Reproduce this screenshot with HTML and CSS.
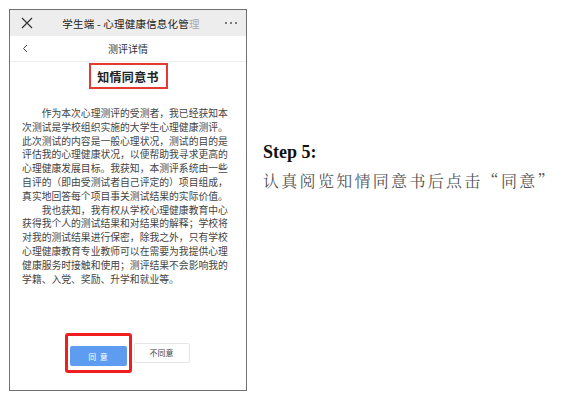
FILE: index.html
```html
<!DOCTYPE html>
<html lang="zh-CN">
<head>
  <meta charset="UTF-8" />
  <meta name="viewport" content="width=device-width, initial-scale=1.0"/>
  <title>Step 5</title>
  <link rel="stylesheet" href="styles.css">
</head>
<body>
  <div class="page">
    <div class="phone">
      <div class="topbar">
        <svg class="close" width="12" height="12" viewBox="0 0 12 12">
          <path d="M1 1L11 11M11 1L1 11" stroke="#333" stroke-width="1.2" fill="none"/>
        </svg>
        <div class="app-title">学生端 - 心理健康信息化管<span class="fade">理</span></div>
        <div class="dots"><i></i><i></i><i></i></div>
      </div>

      <div class="navbar">
        <svg class="back" width="6" height="9" viewBox="0 0 6 9">
          <path d="M5 1L1.5 4.5L5 8" stroke="#444" stroke-width="1" fill="none"/>
        </svg>
        <div class="nav-title">测评详情</div>
      </div>

      <div class="doc">
        <div class="doc-title">知情同意书</div>
        <div class="doc-text">
          <p>作为本次心理测评的受测者，我已经获知本次测试是学校组织实施的大学生心理健康测评。此次测试的内容是一般心理状况，测试的目的是评估我的心理健康状况，以便帮助我寻求更高的心理健康发展目标。我获知，本测评系统由一些自评的（即由受测试者自己评定的）项目组成，真实地回答每个项目事关测试结果的实际价值。</p>
          <p>我也获知，我有权从学校心理健康教育中心获得我个人的测试结果和对结果的解释；学校将对我的测试结果进行保密，除我之外，只有学校心理健康教育专业教师可以在需要为我提供心理健康服务时接触和使用；测评结果不会影响我的学籍、入党、奖励、升学和就业等。</p>
        </div>

        <div class="actions">
          <div class="highlight">
            <button class="btn agree">同&nbsp;&nbsp;意</button>
          </div>
          <button class="btn disagree">不同意</button>
        </div>
      </div>
    </div>

    <div class="note">
      <div class="step">Step 5:</div>
      <div class="hint">认真阅览知情同意书后点击“同意”</div>
    </div>
  </div>
</body>
</html>
```

FILE: styles.css
```css
* { box-sizing: border-box; margin: 0; padding: 0; }
body {
  background: #fff;
  color: #222;
  font-family: "Noto Sans CJK SC", "Noto Sans", sans-serif;
}

.page {
  display: flex;
  align-items: flex-start;
  padding: 9px;
  gap: 16px;
}

.phone {
  width: 238px;
  height: 382px;
  border: 1px solid #707070;
  display: flex;
  flex-direction: column;
}

.topbar {
  height: 26px;
  background: #ededed;
  display: flex;
  align-items: center;
  justify-content: space-between;
  padding: 0 9px 0 11px;
}

.app-title {
  font-size: 10.5px;
  color: #222;
  letter-spacing: 0.2px;
  margin-left: 4px;
}
.app-title .fade { color: #aaa; }

.dots { display: flex; gap: 3px; }
.dots i {
  width: 2px;
  height: 2px;
  background: #555;
  border-radius: 50%;
}

.navbar {
  height: 26px;
  border-bottom: 1px solid #eee;
  display: flex;
  align-items: center;
  position: relative;
  padding-left: 12px;
}
.nav-title {
  position: absolute;
  left: 0;
  right: 0;
  text-align: center;
  font-size: 10px;
  color: #333;
}

.doc {
  flex: 1;
  display: flex;
  flex-direction: column;
  align-items: center;
}

.doc-title {
  margin-top: 1px;
  width: 79px;
  height: 26px;
  border: 2px solid #e53a33;
  display: flex;
  align-items: center;
  justify-content: center;
  font-size: 12px;
  font-weight: 700;
  letter-spacing: 0.3px;
  color: #222;
}

.doc-text {
  margin-top: 18px;
  width: 21em;
  margin-right: 6px;
  font-size: 9.8px;
  line-height: 13.8px;
  color: #444;
}
.doc-text p { text-indent: 2em; }

.actions {
  margin-top: auto;
  margin-bottom: 17px;
  margin-right: 2px;
  display: flex;
  align-items: center;
  gap: 2px;
}

.highlight {
  border: 3px solid #f01e1e;
  border-radius: 3px;
  padding: 5px 2px 4px;
}

.btn {
  height: 20px;
  font-family: inherit;
  font-size: 8px;
  border-radius: 2px;
}
.agree {
  width: 57px;
  background: #5d9cf1;
  color: #fff;
  border: none;
}
.disagree {
  width: 56px;
  background: #fff;
  color: #444;
  border: 1px solid #e6e6e6;
}

.note {
  margin-top: 132px;
}
.step {
  font-family: "Liberation Serif", serif;
  font-weight: 700;
  font-size: 18px;
  line-height: 22px;
  color: #111;
}
.hint {
  margin-top: 8px;
  font-family: "Noto Serif CJK SC", "Noto Sans CJK SC", serif;
  font-size: 16px;
  letter-spacing: 2.3px;
  line-height: 20px;
  color: #555;
}
```
